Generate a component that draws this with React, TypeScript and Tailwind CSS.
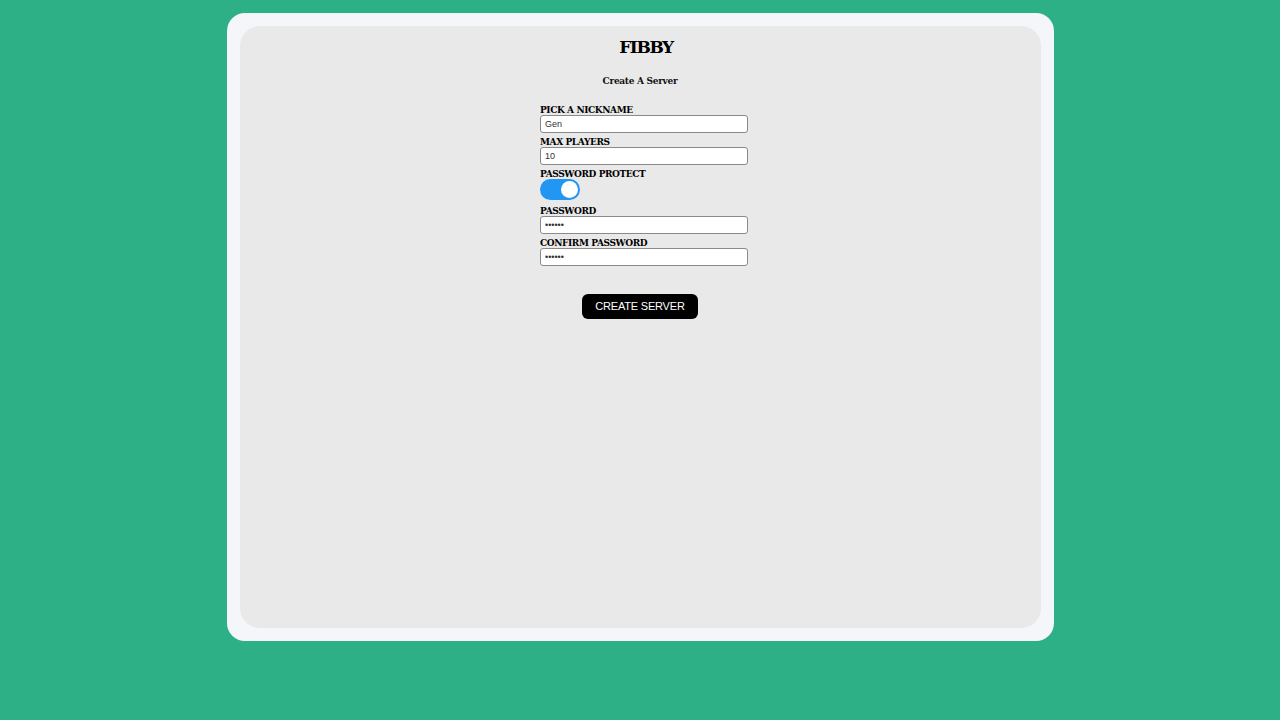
import { useState } from 'react'

const slab = { fontFamily: '"DejaVu Serif", serif' }
const sans = { fontFamily: '"Liberation Sans", Arial, sans-serif' }

function Field({ label, value, type = 'text' }: { label: string; value: string; type?: string }) {
  return (
    <div className="flex flex-col">
      <label className="pt-[4px] text-[9px] font-bold leading-[10px] text-black tracking-[-0.4px]">{label}</label>
      <input
        type={type}
        defaultValue={value}
        className="h-[18px] w-[208px] rounded-[3px] border border-[#8a8a8a] bg-white px-[4px] text-[9px] text-[#333] outline-none"
        style={sans}
      />
    </div>
  )
}

export default function App() {
  const [locked, setLocked] = useState(true)

  return (
    <div className="min-h-screen w-full bg-[#2eb086] flex justify-center pt-[13px]">
      <div className="w-[827px] h-[628px] rounded-[18px] bg-[#f4f6fa] p-[13px]">
        <div className="h-full w-full rounded-[20px] bg-[#e9e9e9] flex flex-col items-center" style={slab}>
          <h1 className="mt-[10px] pl-[12px] text-[17px] font-bold leading-[22px] tracking-[-1.4px] text-black">FIBBY</h1>
          <p className="mt-[16px] text-[9px] font-bold leading-[14px] tracking-[-0.3px] text-[#111]">Create A Server</p>

          <form className="mt-[13px] ml-[8px] flex w-[208px] flex-col" onSubmit={e => e.preventDefault()}>
            <Field label="PICK A NICKNAME" value="Gen" />
            <Field label="MAX PLAYERS" value="10" />
            <div className="flex flex-col">
              <span className="pt-[4px] text-[9px] font-bold leading-[10px] text-black tracking-[-0.4px]">PASSWORD PROTECT</span>
              <button
                type="button"
                onClick={() => setLocked(!locked)}
                className={`h-[21px] w-[40px] rounded-full p-[2px] flex items-center ${locked ? 'bg-[#2196f3] justify-end' : 'bg-[#ccc] justify-start'}`}
              >
                <span className="block h-[17px] w-[17px] rounded-full bg-white" />
              </button>
            </div>
            <div className="mt-[2px]">
              <Field label="PASSWORD" value="secret" type="password" />
            </div>
            <Field label="CONFIRM PASSWORD" value="secret" type="password" />
          </form>

          <button
            type="submit"
            className="mt-[28px] h-[25px] w-[116px] rounded-[6px] bg-black text-[11px] tracking-[-0.2px] text-white"
            style={sans}
          >
            CREATE SERVER
          </button>
        </div>
      </div>
    </div>
  )
}
